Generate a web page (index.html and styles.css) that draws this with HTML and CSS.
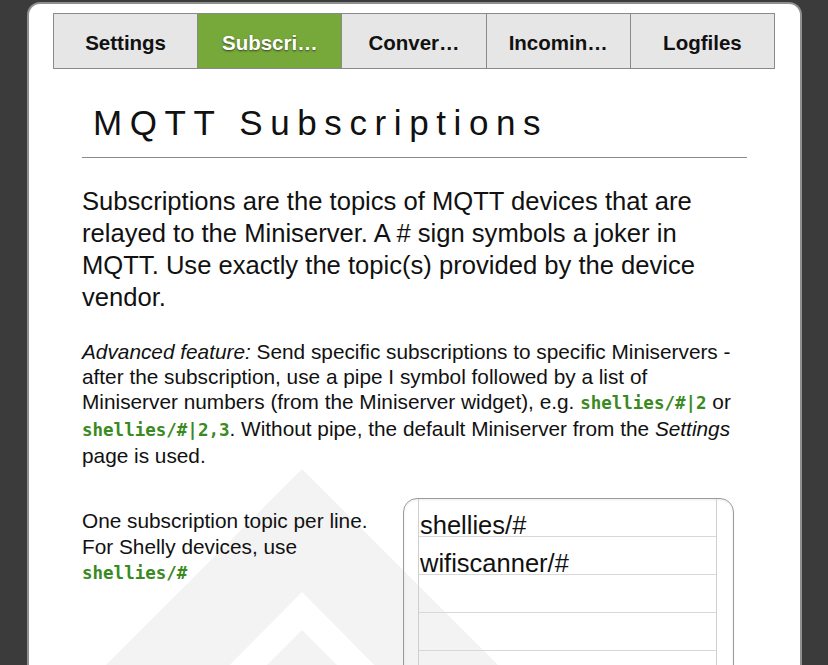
FILE: index.html
```html
<!DOCTYPE html>
<html>
<head>
<meta charset="utf-8">
<link rel="stylesheet" href="styles.css">
</head>
<body>
<div class="card">
  <svg class="watermark" width="774" height="700" viewBox="0 0 774 700" aria-hidden="true">
    <polygon points="273,465 -77,815 48,815 273,588 498,815 623,815" fill="#f3f3f3"/>
    <polygon points="273,626 84,815 462,815" fill="#f3f3f3"/>
  </svg>
  <div class="content">
    <nav class="tabs">
      <div class="tab">Settings</div>
      <div class="tab active">Subscri…</div>
      <div class="tab">Conver…</div>
      <div class="tab">Incomin…</div>
      <div class="tab">Logfiles</div>
    </nav>
    <main class="page">
      <h1 class="title">MQTT Subscriptions</h1>
      <hr class="rule">
      <p class="lead">Subscriptions are the topics of MQTT devices that are relayed to the Miniserver. A # sign symbols a joker in MQTT. Use exactly the topic(s) provided by the device vendor.</p>
      <p class="note"><em>Advanced feature:</em> Send specific subscriptions to specific Miniservers - after the subscription, use a pipe I symbol followed by a list of Miniserver numbers (from the Miniserver widget), e.g. <code>shellies/#|2</code> or <code>shellies/#|2,3</code>. Without pipe, the default Miniserver from the <em>Settings</em> page is used.</p>
      <div class="editor-row">
        <p class="hint">One subscription topic per line. For Shelly devices, use <code>shellies/#</code></p>
        <div class="textarea">
          <div class="paper">
            <div class="line">shellies/#</div>
            <div class="line">wifiscanner/#</div>
            <div class="line">&nbsp;</div>
            <div class="line">&nbsp;</div>
            <div class="line">&nbsp;</div>
          </div>
        </div>
      </div>
    </main>
  </div>
</div>
</body>
</html>
```
FILE: styles.css
```css
html, body {
  margin: 0;
  padding: 0;
  background: #3b3b3b;
  overflow: hidden;
}
body {
  font-family: "Liberation Sans", Arial, sans-serif;
  color: #111;
}
.card {
  position: relative;
  margin: 2px 0 0 27px;
  width: 771px;
  height: 720px;
  background: #fff;
  border: 2px solid #8f8f8f;
  border-bottom: none;
  border-radius: 13px 13px 0 0;
  overflow: hidden;
}
.watermark {
  position: absolute;
  left: 0;
  top: 0;
}
.content {
  position: relative;
  padding: 9px 25px 0 24px;
}
.tabs {
  display: flex;
  height: 54px;
  border: 1px solid #8a8a8a;
  background: #e6e6e6;
}
.tab {
  flex: 1;
  display: flex;
  align-items: center;
  justify-content: center;
  font-weight: bold;
  font-size: 20.5px;
  color: #111;
  border-left: 1px solid #8a8a8a;
  padding-top: 3px;
}
.tab:first-child {
  border-left: none;
}
.tab.active {
  background: #76a83a;
  color: #fff;
  text-shadow: 0 1px 2px rgba(0,0,0,0.6);
}
.page {
  padding: 0 28px 0 29px;
}
.title {
  margin: 34px 0 0 11px;
  font-size: 35px;
  font-weight: normal;
  letter-spacing: 7.6px;
  line-height: 40px;
}
.rule {
  margin: 14px 0 0 0;
  border: none;
  border-top: 1.5px solid #8a8a8a;
  height: 0;
}
.lead {
  margin: 27px 0 0 0;
  font-size: 25.6px;
  line-height: 32px;
}
.note {
  margin: 26px 0 0 0;
  font-size: 20.8px;
  line-height: 25px;
}
code {
  font-family: "DejaVu Sans Mono", "Liberation Mono", monospace;
  font-weight: bold;
  font-size: 17.5px;
  color: #3a8a22;
}
.editor-row {
  display: flex;
  gap: 18px;
  margin-top: 30px;
}
.hint {
  margin: 10px 0 0 0;
  width: 303px;
  font-size: 20.8px;
  line-height: 25.5px;
}
.textarea {
  width: 299px;
  height: 200px;
  border: 1px solid #9a9a9a;
  border-radius: 14px;
  padding: 0 16px 0 14px;
  box-shadow: inset 0 1px 3px rgba(0,0,0,0.08);
}
.paper {
  height: 100%;
  border-left: 1px solid #cfcfcf;
  border-right: 1px solid #cfcfcf;
  background: repeating-linear-gradient(to bottom, transparent 0, transparent 37px, #d8d8d8 37px, #d8d8d8 38px);
}
.line {
  height: 38px;
  font-size: 25.5px;
  line-height: 52px;
  padding-left: 1px;
  white-space: nowrap;
}
```
